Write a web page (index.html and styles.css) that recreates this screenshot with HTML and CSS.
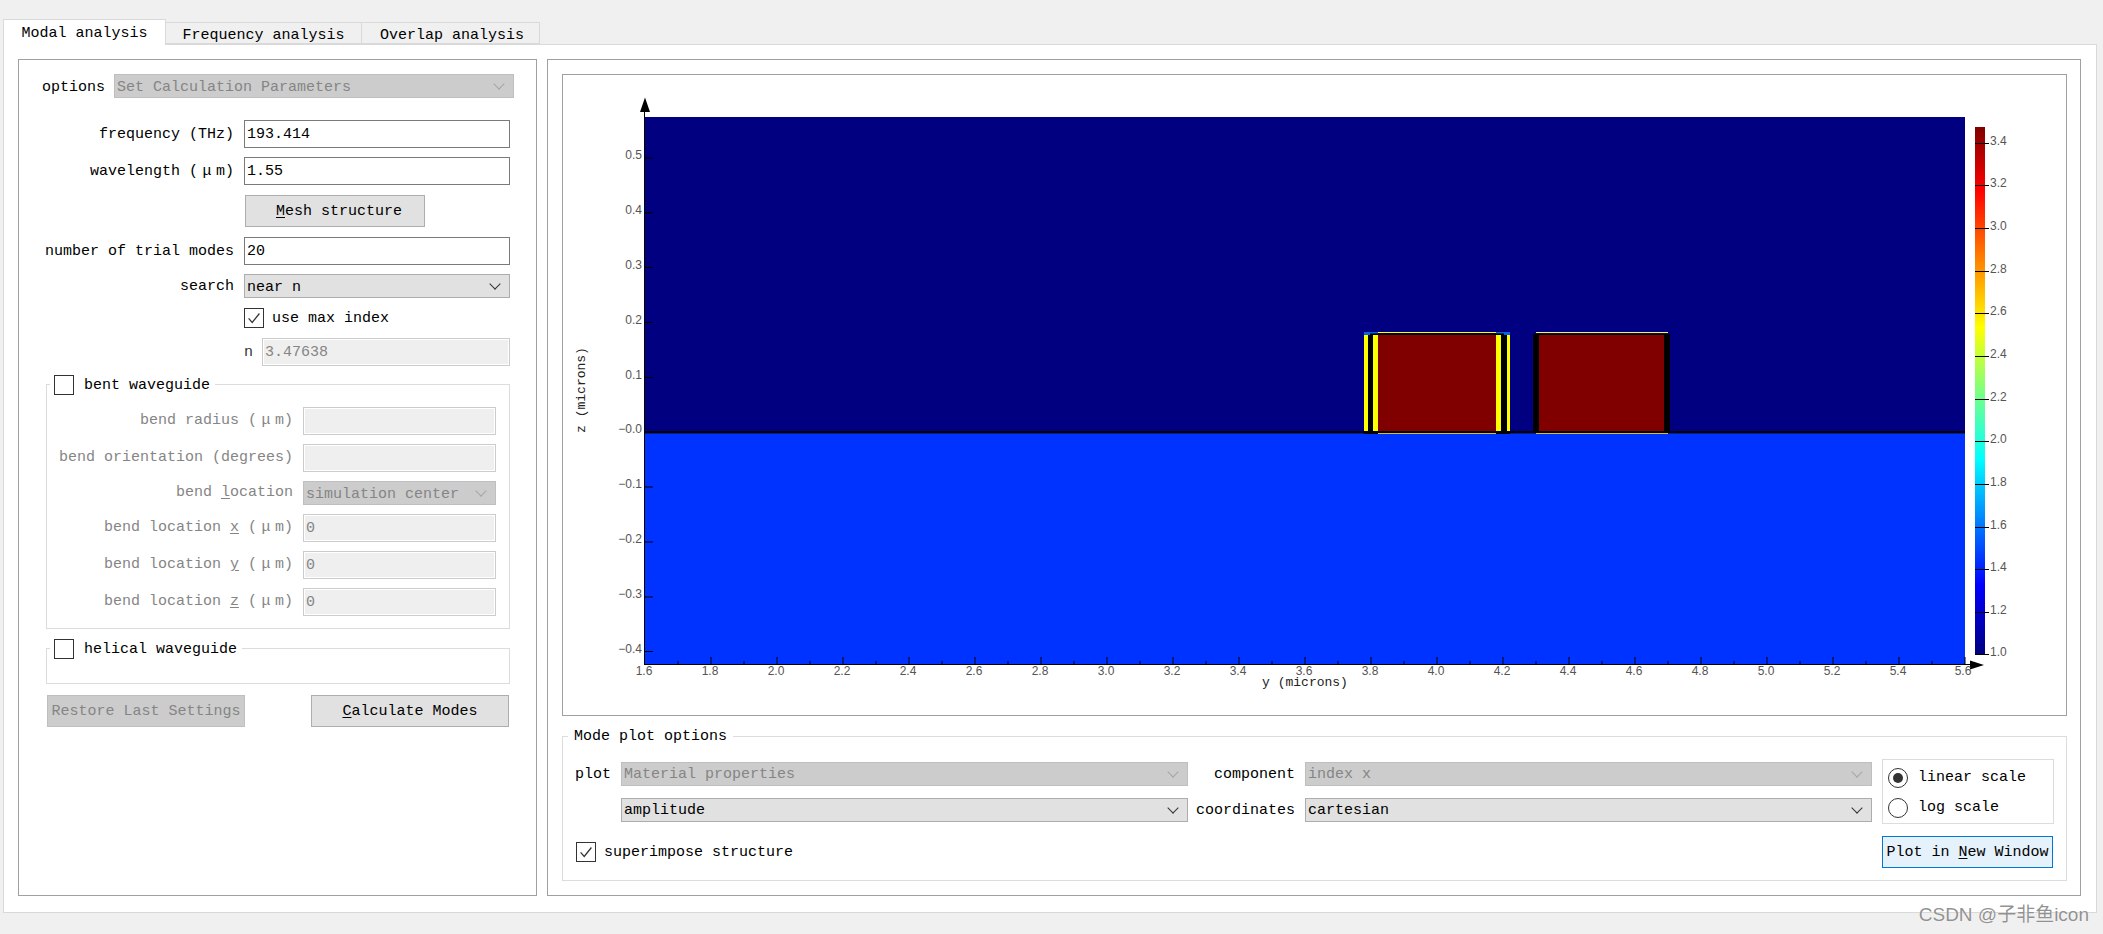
FILE: index.html
```html
<!DOCTYPE html>
<html lang="en">
<head>
    <meta charset="UTF-8">
    <meta name="viewport" content="width=device-width, initial-scale=1.0">
    <title>Modal analysis</title>
    <link rel="stylesheet" href="styles.css">
</head>
<body>
    <div class="tabs">
        <div class="tab tab-active">Modal analysis</div>
        <div class="tab tab-freq">Frequency analysis</div>
        <div class="tab tab-overlap">Overlap analysis</div>
    </div>

    <div class="pane">
        <div class="panel panel-left">
            <div class="row row-options">
                <label>options</label>
                <div class="combo combo-disabled combo-options">Set Calculation Parameters</div>
            </div>

            <div class="row row-form row-frequency">
                <label class="form-label">frequency (THz)</label>
                <div class="field">193.414</div>
            </div>
            <div class="row row-form gap-9">
                <label class="form-label">wavelength (<span class="mu">μ</span>m)</label>
                <div class="field">1.55</div>
            </div>
            <button class="btn btn-mesh"><u>M</u>esh structure</button>
            <div class="row row-form gap-10">
                <label class="form-label">number of trial modes</label>
                <div class="field">20</div>
            </div>
            <div class="row row-form row-short gap-9">
                <label class="form-label">search</label>
                <div class="combo combo-main">near n</div>
            </div>
            <div class="row row-short row-check gap-10">
                <span class="check">
                    <svg viewBox="0 0 20 20"><path d="M4 10.500l4 4.500 8-10"/></svg>
                </span>
                <label>use max index</label>
            </div>
            <div class="row row-n gap-10">
                <label>n</label>
                <div class="field field-disabled field-n">3.47638</div>
            </div>

            <div class="group group-bent">
                <div class="legend">
                    <span class="check"></span>
                    <label>bent waveguide</label>
                </div>
                <div class="row row-sub row-sub-first">
                    <label class="sub-label">bend radius (<span class="mu">μ</span>m)</label>
                    <div class="field field-disabled field-sub"></div>
                </div>
                <div class="row row-sub gap-9">
                    <label class="sub-label">bend orientation (degrees)</label>
                    <div class="field field-disabled field-sub"></div>
                </div>
                <div class="row row-sub row-short gap-9">
                    <label class="sub-label">bend <u>l</u>ocation</label>
                    <div class="combo combo-disabled combo-sub">simulation center</div>
                </div>
                <div class="row row-sub gap-9">
                    <label class="sub-label">bend location <u>x</u> (<span class="mu">μ</span>m)</label>
                    <div class="field field-disabled field-sub">0</div>
                </div>
                <div class="row row-sub gap-9">
                    <label class="sub-label">bend location <u>y</u> (<span class="mu">μ</span>m)</label>
                    <div class="field field-disabled field-sub">0</div>
                </div>
                <div class="row row-sub gap-9">
                    <label class="sub-label">bend location <u>z</u> (<span class="mu">μ</span>m)</label>
                    <div class="field field-disabled field-sub">0</div>
                </div>
            </div>

            <div class="group group-helical">
                <div class="legend">
                    <span class="check"></span>
                    <label>helical waveguide</label>
                </div>
            </div>

            <div class="row-buttons">
                <button class="btn btn-action btn-disabled">Restore Last Settings</button>
                <button class="btn btn-action"><u>C</u>alculate Modes</button>
            </div>
        </div>

        <div class="panel panel-right">
            <div class="plot-frame">
                <svg class="plot" width="1503" height="640" viewBox="563 75 1503 640">
                    <defs>
                        <linearGradient id="jet" x1="0" y1="0" x2="0" y2="1">
                            <stop offset="0" stop-color="#800000"/>
                            <stop offset="0.12" stop-color="#ff0000"/>
                            <stop offset="0.38" stop-color="#ffff00"/>
                            <stop offset="0.5" stop-color="#7fff7f"/>
                            <stop offset="0.63" stop-color="#00ffff"/>
                            <stop offset="0.87" stop-color="#0000ff"/>
                            <stop offset="1" stop-color="#000080"/>
                        </linearGradient>
                    </defs>

                    <!-- cladding -->
                    <rect x="644" y="117" width="1321" height="315" fill="#000080"/>
                    <rect x="644" y="432" width="1321" height="232" fill="#0033ff"/>
                    <rect x="644" y="431" width="1321" height="2.4" fill="#000"/>

                    <!-- first waveguide -->
                    <rect x="1364" y="332" width="146" height="102" fill="#000"/>
                    <rect x="1364" y="332" width="14" height="3" fill="#0a60e8"/>
                    <rect x="1496" y="332" width="14" height="3" fill="#0a60e8"/>
                    <rect x="1370" y="333.4" width="8" height="2" fill="#000"/>
                    <rect x="1496" y="333.4" width="8" height="2" fill="#000"/>
                    <rect x="1364" y="335" width="4" height="96" fill="#ff0"/>
                    <rect x="1373" y="335" width="5" height="96" fill="#ff0"/>
                    <rect x="1496" y="335" width="5" height="96" fill="#ff0"/>
                    <rect x="1507" y="335" width="3" height="96" fill="#ff0"/>
                    <rect x="1378" y="335" width="118" height="96" fill="#800000"/>
                    <rect x="1378" y="332" width="118" height="1" fill="#ff0"/>
                    <rect x="1378" y="433" width="118" height="1" fill="#e0c000"/>

                    <!-- second waveguide -->
                    <rect x="1533" y="334" width="137" height="99" fill="#000"/>
                    <rect x="1539" y="335" width="125" height="96" fill="#800000"/>
                    <rect x="1536" y="332" width="132" height="1" fill="#ff0"/>
                    <rect x="1536" y="433" width="132" height="1" fill="#e0c000"/>

                    <!-- axes -->
                    <path class="axis" d="M644.5 110V665M644 664.500H1972"/>
                    <path d="M645 97.500L650 112H640Z"/>
                    <path d="M1984 665L1970 660.500V669.500Z"/>
                    <path class="axis" d="M644 158h9M644 212.800h9M644 267.500h9M644 322.500h9M644 377.500h9M644 487h9M644 542h9M644 597h9M644 651.500h9"/>
                    <path class="axis" d="M711 664v-7M777 664v-7M843 664v-7M909 664v-7M975 664v-7M1041 664v-7M1107 664v-7M1173 664v-7M1239 664v-7M1305 664v-7M1371 664v-7M1437 664v-7M1503 664v-7M1569 664v-7M1635 664v-7M1701 664v-7M1767 664v-7M1833 664v-7M1899 664v-7M1965 664v-7"/>
                    <path class="axis" d="M678 664v-3M744 664v-3M810 664v-3M876 664v-3M942 664v-3M1008 664v-3M1074 664v-3M1140 664v-3M1206 664v-3M1272 664v-3M1338 664v-3M1404 664v-3M1470 664v-3M1536 664v-3M1602 664v-3M1668 664v-3M1734 664v-3M1800 664v-3M1866 664v-3M1932 664v-3"/>

                    <g class="tick-y">
                        <text x="642" y="159">0.5</text>
                        <text x="642" y="214">0.4</text>
                        <text x="642" y="269">0.3</text>
                        <text x="642" y="324">0.2</text>
                        <text x="642" y="379">0.1</text>
                        <text x="642" y="433">−0.0</text>
                        <text x="642" y="488">−0.1</text>
                        <text x="642" y="543">−0.2</text>
                        <text x="642" y="598">−0.3</text>
                        <text x="642" y="653">−0.4</text>
                    </g>
                    <g class="tick-x">
                        <text x="644" y="675">1.6</text>
                        <text x="710" y="675">1.8</text>
                        <text x="776" y="675">2.0</text>
                        <text x="842" y="675">2.2</text>
                        <text x="908" y="675">2.4</text>
                        <text x="974" y="675">2.6</text>
                        <text x="1040" y="675">2.8</text>
                        <text x="1106" y="675">3.0</text>
                        <text x="1172" y="675">3.2</text>
                        <text x="1238" y="675">3.4</text>
                        <text x="1304" y="675">3.6</text>
                        <text x="1370" y="675">3.8</text>
                        <text x="1436" y="675">4.0</text>
                        <text x="1502" y="675">4.2</text>
                        <text x="1568" y="675">4.4</text>
                        <text x="1634" y="675">4.6</text>
                        <text x="1700" y="675">4.8</text>
                        <text x="1766" y="675">5.0</text>
                        <text x="1832" y="675">5.2</text>
                        <text x="1898" y="675">5.4</text>
                        <text x="1963" y="675">5.6</text>
                    </g>
                    <text class="axis-title" x="1305" y="686">y (microns)</text>
                    <text class="axis-title" transform="translate(585 390) rotate(-90)">z (microns)</text>

                    <!-- colour bar -->
                    <rect x="1975" y="127" width="10" height="527" fill="url(#jet)"/>
                    <path class="axis" d="M1975 143.500h14M1975 185.500h14M1975 228.500h14M1975 271.500h14M1975 313.500h14M1975 356.500h14M1975 399.500h14M1975 441.500h14M1975 484.500h14M1975 527.500h14M1975 569.500h14M1975 612.500h14M1975 654.500h14"/>
                    <g class="tick-bar">
                        <text x="1990" y="145">3.4</text>
                        <text x="1990" y="187">3.2</text>
                        <text x="1990" y="230">3.0</text>
                        <text x="1990" y="273">2.8</text>
                        <text x="1990" y="315">2.6</text>
                        <text x="1990" y="358">2.4</text>
                        <text x="1990" y="401">2.2</text>
                        <text x="1990" y="443">2.0</text>
                        <text x="1990" y="486">1.8</text>
                        <text x="1990" y="529">1.6</text>
                        <text x="1990" y="571">1.4</text>
                        <text x="1990" y="614">1.2</text>
                        <text x="1990" y="656">1.0</text>
                    </g>
                </svg>
            </div>

            <div class="group group-mode">
                <div class="legend legend-mode">Mode plot options</div>
                <div class="mode-body">
                    <div class="mode-grid">
                        <label class="mode-label mode-label-first">plot</label>
                        <div class="combo combo-disabled">Material properties</div>
                        <label class="mode-label">component</label>
                        <div class="combo combo-disabled combo-right">index x</div>
                        <span></span>
                        <div class="combo">amplitude</div>
                        <label class="mode-label">coordinates</label>
                        <div class="combo combo-right">cartesian</div>
                        <div class="superimpose">
                            <span class="check">
                                <svg viewBox="0 0 20 20"><path d="M4 10.500l4 4.500 8-10"/></svg>
                            </span>
                            <label>superimpose structure</label>
                        </div>
                    </div>
                    <div class="mode-side">
                        <div class="scale-box">
                            <div class="scale-row"><span class="radio radio-on"></span>linear scale</div>
                            <div class="scale-row"><span class="radio"></span>log scale</div>
                        </div>
                        <button class="btn btn-plot">Plot in <u>N</u>ew Window</button>
                    </div>
                </div>
            </div>
        </div>
    </div>

    <div class="watermark">CSDN @子非鱼icon</div>
</body>
</html>
```

FILE: styles.css
```css
:root {
    --panel-line: #a0a0a0;
    --group-line: #dcdcdc;
    --disabled-text: #858585;
}

* {
    margin: 0;
    padding: 0;
    box-sizing: border-box;
}

body {
    width: 2103px;
    height: 934px;
    overflow: hidden;
    position: relative;
    padding-top: 19px;
    background-color: #f0f0f0;
    color: #000;
    font-family: "Liberation Mono", "DejaVu Sans Mono", monospace;
    font-size: 15px;
    line-height: 20px;
}

label {
    padding-top: 2px;
}

u {
    text-underline-offset: 2px;
}

/* tabs */
.tabs {
    display: flex;
    align-items: flex-end;
    height: 25px;
    padding-left: 3px;
}

.tab {
    height: 22px;
    background-color: #f0f0f0;
    border: 1px solid #d9d9d9;
    border-left: none;
    text-align: center;
    line-height: 25px;
}

.tab-active {
    width: 163px;
    height: 26px;
    margin-bottom: -1px;
    position: relative;
    background-color: #fff;
    border-left: 1px solid #d9d9d9;
    border-bottom: none;
    line-height: 27px;
}

.tab-freq {
    width: 196px;
}

.tab-overlap {
    width: 178px;
    padding-left: 3px;
}

.pane {
    display: flex;
    gap: 10px;
    width: 2094px;
    height: 869px;
    margin-left: 3px;
    padding: 14px 0 0 14px;
    background-color: #fff;
    border: 1px solid #d9d9d9;
}

.panel {
    height: 837px;
    background-color: #fff;
    border: 1px solid var(--panel-line);
}

.panel-left {
    width: 519px;
    padding-top: 14px;
}

.panel-right {
    width: 1534px;
    padding: 14px 0 0 14px;
}

/* form rows */
.row {
    display: flex;
    align-items: center;
    height: 28px;
}

.row-options {
    height: 24px;
    padding-left: 23px;
    gap: 9px;
}

.row-options label {
    padding-top: 3px;
}

.row-frequency {
    margin-top: 22px;
}

.gap-9 {
    margin-top: 9px;
}

.gap-10 {
    margin-top: 10px;
}

.row-form {
    gap: 10px;
}

.row-short {
    height: 24px;
}

.row-check {
    height: 20px;
    padding-left: 225px;
    gap: 8px;
}

.row-n {
    padding-left: 225px;
    gap: 9px;
    color: #333;
}

.form-label {
    width: 215px;
    text-align: right;
}

.mu {
    display: inline-block;
    width: 18px;
    text-align: center;
}

.field {
    width: 266px;
    height: 28px;
    padding: 1px 2px 0;
    background-color: #fff;
    border: 1px solid #7a7a7a;
    line-height: 26px;
}

.field-disabled {
    background-color: #efefef;
    border-color: #ccc;
    box-shadow: inset 0 0 0 1px #fff;
    color: var(--disabled-text);
}

.field-n {
    width: 248px;
}

.field-sub {
    width: 193px;
}

.combo {
    display: flex;
    align-items: center;
    height: 24px;
    padding: 3px 0 0 2px;
    background-color: #e1e1e1;
    border: 1px solid #adadad;
    line-height: 19px;
}

.combo::after {
    content: "";
    width: 7px;
    height: 7px;
    margin: -8px 10px 0 auto;
    border-right: 1px solid #333;
    border-bottom: 1px solid #333;
    transform: rotate(45deg);
}

.combo-disabled {
    background-color: #ccc;
    border-color: #bfbfbf;
    color: var(--disabled-text);
}

.combo-disabled::after {
    border-color: #a6a6a6;
}

.combo-options {
    width: 400px;
}

.combo-main {
    width: 266px;
}

.combo-sub {
    width: 193px;
}

.check {
    flex: none;
    width: 20px;
    height: 20px;
    background-color: #fff;
    border: 1px solid #333;
}

.check svg {
    display: block;
    width: 18px;
    height: 18px;
    fill: none;
    stroke: #333;
    stroke-width: 1.4;
}

/* group boxes */
.group {
    background-color: #fff;
    border: 1px solid var(--group-line);
}

.legend {
    display: flex;
    align-items: center;
    gap: 10px;
    width: fit-content;
    height: 20px;
    margin: -10px 0 0 3px;
    padding: 0 5px 0 4px;
    background-color: #fff;
}

.group-bent {
    width: 464px;
    height: 245px;
    margin: 18px 0 0 27px;
    color: var(--disabled-text);
}

.group-bent .legend {
    color: #000;
}

.row-sub {
    gap: 10px;
}

.row-sub-first {
    margin-top: 12px;
}

.sub-label {
    width: 246px;
    padding-top: 0;
    text-align: right;
}

.group-helical {
    width: 464px;
    height: 36px;
    margin: 19px 0 0 27px;
}

.row-buttons {
    display: flex;
    gap: 66px;
    margin: 11px 0 0 28px;
}

/* buttons */
.btn {
    display: block;
    height: 32px;
    padding-top: 2px;
    background-color: #e1e1e1;
    border: 1px solid #adadad;
    color: #000;
    font: inherit;
}

.btn-mesh {
    width: 180px;
    margin: 10px 0 0 226px;
    padding-left: 8px;
}

.btn-action {
    width: 198px;
}

.btn-disabled {
    background-color: #ccc;
    border-color: #bfbfbf;
    color: var(--disabled-text);
}

.btn-plot {
    width: 171px;
    background-color: #e5f1fb;
    border-color: #0078d7;
}

/* plot */
.plot-frame {
    width: 1505px;
    height: 642px;
    border: 1px solid var(--panel-line);
}

.plot {
    display: block;
}

.axis {
    fill: none;
    stroke: #000;
    stroke-width: 1;
}

.tick-y text,
.tick-x text,
.tick-bar text {
    fill: #555;
    font-family: "Liberation Sans", Arial, sans-serif;
    font-size: 12px;
}

.tick-y text {
    text-anchor: end;
}

.tick-x text {
    text-anchor: middle;
}

.axis-title {
    fill: #222;
    font-size: 13px;
    text-anchor: middle;
}

/* mode plot options */
.group-mode {
    width: 1505px;
    height: 145px;
    margin-top: 20px;
}

.legend-mode {
    margin-left: 5px;
    padding: 0 6px;
}

.mode-body {
    display: flex;
    gap: 10px;
    padding-left: 12px;
}

.mode-grid {
    display: grid;
    grid-template-columns: 46px 567px 107px 577px;
    grid-auto-rows: 24px;
    row-gap: 12px;
    margin-top: 15px;
}

.mode-grid .combo {
    padding-top: 1px;
}

.mode-grid .combo::after {
    margin-top: -6px;
}

.mode-label {
    padding-top: 1px;
    text-align: right;
    line-height: 24px;
}

.mode-label-first {
    text-align: left;
}

.combo-right {
    margin-left: 10px;
}

.superimpose {
    display: flex;
    align-items: center;
    gap: 8px;
    grid-column: 1 / 3;
    height: 20px;
    margin: 8px 0 0 1px;
}

.mode-side {
    display: flex;
    flex-direction: column;
    gap: 12px;
    margin-top: 12px;
}

.scale-box {
    width: 172px;
    height: 65px;
    padding: 8px 0 0 5px;
    border: 1px solid var(--group-line);
}

.scale-row {
    display: flex;
    align-items: center;
    gap: 10px;
    height: 20px;
    margin-bottom: 10px;
}

.radio {
    display: flex;
    align-items: center;
    justify-content: center;
    width: 20px;
    height: 20px;
    background-color: #fff;
    border: 1px solid #333;
    border-radius: 50%;
}

.radio-on::after {
    content: "";
    width: 10px;
    height: 10px;
    background-color: #333;
    border-radius: 50%;
}

.watermark {
    position: absolute;
    right: 14px;
    bottom: 7px;
    color: rgba(110, 110, 110, 0.75);
    font-family: "Liberation Sans", "Noto Sans CJK SC", sans-serif;
    font-size: 19px;
    line-height: 24px;
    text-shadow: 0 0 1px #fff;
}
```
